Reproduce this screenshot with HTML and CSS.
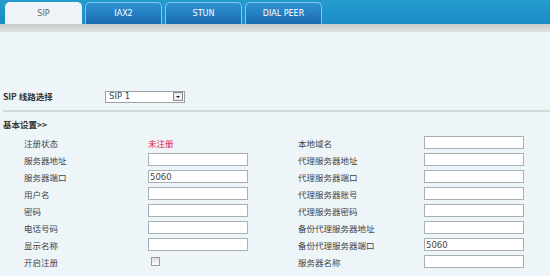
FILE: index.html
```html
<!DOCTYPE html>
<html lang="zh-CN">
<head>
  <meta charset="UTF-8">
  <title>SIP</title>
  <link rel="stylesheet" href="styles.css">
</head>
<body>
  <!-- Tabs -->
  <div class="topbar">
    <div class="tab active">SIP</div>
    <div class="tab">IAX2</div>
    <div class="tab">STUN</div>
    <div class="tab">DIAL PEER</div>
  </div>
  <div class="band"></div>

  <div class="content">
    <div class="line-select">
      <span class="line-label">SIP 线路选择</span>
      <div class="select-box">
        <span class="select-text">SIP 1</span>
        <span class="select-arrow"></span>
      </div>
    </div>

    <h3 class="section-title">基本设置&gt;&gt;</h3>

    <div class="form-grid">
      <span class="label">注册状态</span>
      <span class="status">未注册</span>
      <span class="label">本地域名</span>
      <input type="text">

      <span class="label">服务器地址</span>
      <input type="text">
      <span class="label">代理服务器地址</span>
      <input type="text">

      <span class="label">服务器端口</span>
      <input type="text" value="5060">
      <span class="label">代理服务器端口</span>
      <input type="text">

      <span class="label">用户名</span>
      <input type="text">
      <span class="label">代理服务器账号</span>
      <input type="text">

      <span class="label">密码</span>
      <input type="text">
      <span class="label">代理服务器密码</span>
      <input type="text">

      <span class="label">电话号码</span>
      <input type="text">
      <span class="label">备份代理服务器地址</span>
      <input type="text">

      <span class="label">显示名称</span>
      <input type="text">
      <span class="label">备份代理服务器端口</span>
      <input type="text" value="5060">

      <span class="label">开启注册</span>
      <span><span class="checkbox"></span></span>
      <span class="label">服务器名称</span>
      <input type="text">
    </div>
  </div>
</body>
</html>
```

FILE: styles.css
```css
body {
  margin: 0;
  background: #eef5f8;
  font-family: "Noto Sans CJK SC", sans-serif;
  color: #444;
  width: 550px;
  height: 276px;
  overflow: hidden;
}

/* Top tab bar */
.topbar {
  height: 24px;
  background: linear-gradient(#249bcd, #1b8cc6);
  display: flex;
  align-items: flex-end;
  gap: 3px;
  padding-left: 5px;
}

.tab {
  width: 75px;
  height: 21px;
  border: 1px solid #7cc8ea;
  border-bottom: none;
  border-radius: 5px 5px 0 0;
  background: linear-gradient(#2f93d2, #1a6cb1);
  color: #fff;
  font-family: "DejaVu Sans", sans-serif;
  font-size: 8px;
  line-height: 22px;
  text-align: center;
}

.tab.active {
  border-color: #f2f5f8;
  background: #eef3f7;
  color: #666;
}

.band {
  height: 8px;
  background: linear-gradient(#c6cbcb, #dee2e2);
}

.content {
  padding: 58px 0 0 3px;
}

/* Line select row */
.line-select {
  display: flex;
  align-items: center;
  height: 13px;
  padding-bottom: 7px;
  border-bottom: 2px solid #d3d8db;
}

.line-label {
  flex: 0 0 102px;
  font-weight: bold;
  font-size: 8.5px;
  line-height: 1;
  color: #333;
}

.select-box {
  flex: 0 0 auto;
  box-sizing: border-box;
  width: 80px;
  height: 12px;
  display: flex;
  align-items: center;
  justify-content: space-between;
  padding: 0 1px 0 3px;
  border: 1px solid #9aa3a8;
  background: #fff;
}

.select-text {
  font-family: "DejaVu Sans", sans-serif;
  font-size: 8.5px;
  line-height: 1;
  color: #444;
}

.select-arrow {
  position: relative;
  box-sizing: border-box;
  width: 10px;
  height: 9px;
  border: 1px solid #888;
  background: #eee;
}

.select-arrow::after {
  content: "";
  position: absolute;
  left: 2px;
  top: 3px;
  border-left: 2px solid transparent;
  border-right: 2px solid transparent;
  border-top: 2px solid #222;
}

.section-title {
  margin: 0;
  padding-top: 7px;
  height: 15px;
  font-size: 8.5px;
  color: #333;
  line-height: 10px;
}

/* Settings grid */
.form-grid {
  display: grid;
  grid-template-columns: 124px 150px 126px 100px;
  grid-auto-rows: 17px;
  align-items: center;
  padding-left: 21px;
  font-size: 8.5px;
}

.status {
  color: #e8101a;
}

input {
  box-sizing: border-box;
  width: 100px;
  height: 13px;
  margin: 0;
  padding: 0 1px;
  border: 1px solid #a7b0b5;
  background: #fff;
  font-family: "DejaVu Sans", sans-serif;
  font-size: 8.5px;
  color: #444;
}

.checkbox {
  display: block;
  width: 7px;
  height: 7px;
  margin-left: 3px;
  border: 1px solid #999;
  background: linear-gradient(#ddd, #fff);
}
```
